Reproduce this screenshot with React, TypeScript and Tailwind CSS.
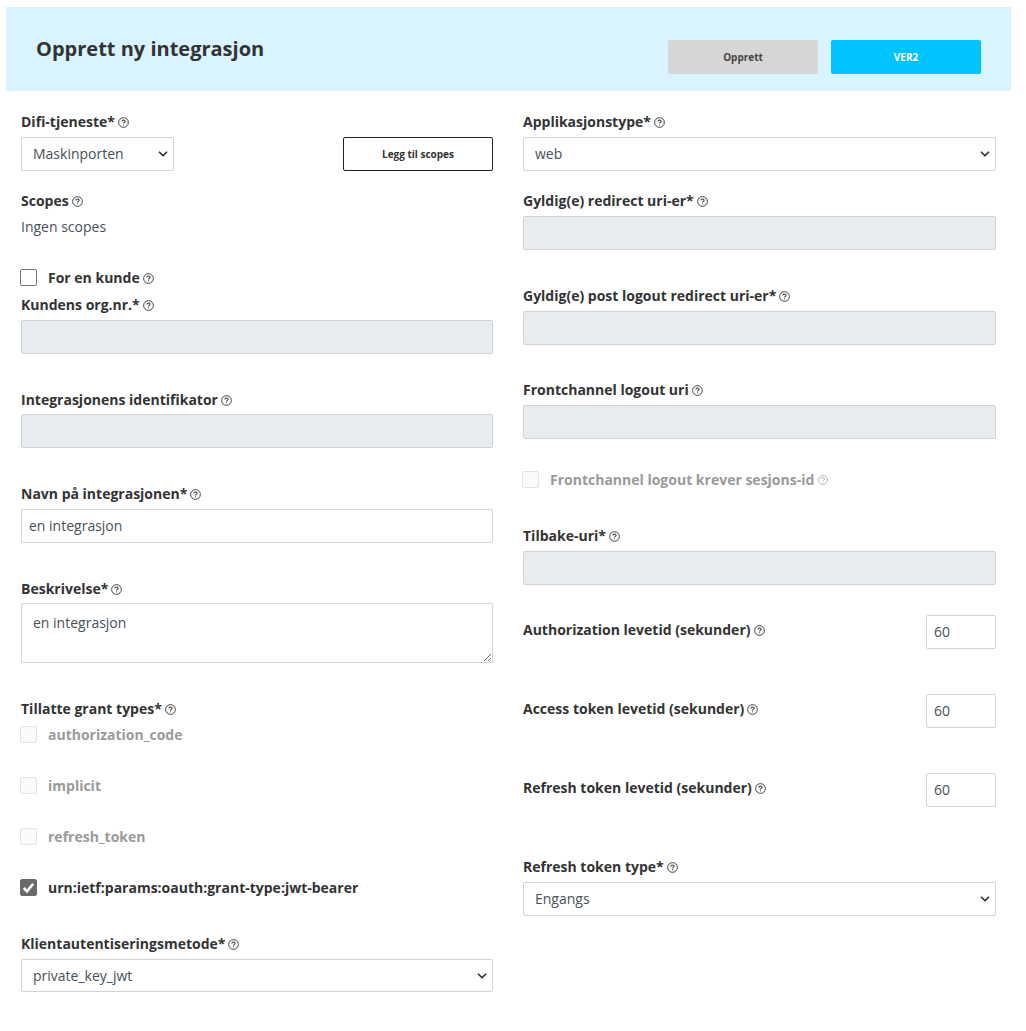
import { ChevronDown } from "lucide-react";

function Help(props: { muted?: boolean }) {
  return (
    <svg
      viewBox="0 0 12 12"
      className={`inline-block align-[-1px] ${props.muted ? "ml-[4px] h-[10px] w-[10px] text-[#aaaaaa]" : "ml-[3px] h-[11px] w-[11px] text-[#333333]"}`}
      fill="none"
      stroke="currentColor"
    >
      <circle cx="6" cy="6" r="5.3" strokeWidth="1" />
      <path d="M4.2 4.8c0-1 .8-1.6 1.8-1.6s1.8.6 1.8 1.5c0 1.2-1.8 1.2-1.8 2.5" strokeWidth="1.1" />
      <path d="M6 8.1v1" strokeWidth="1.1" />
    </svg>
  );
}

function Label(props: { text: string; className?: string }) {
  return (
    <div className={`h-5 text-sm leading-5 font-bold text-[#333333] ${props.className ?? ""}`}>
      {props.text}
      <Help />
    </div>
  );
}

function TextBox(props: { value?: string; disabled?: boolean; className?: string }) {
  return (
    <input
      readOnly
      disabled={props.disabled}
      defaultValue={props.value}
      className={`block h-[34px] w-full rounded-[2px] border border-[#ced4da] px-[7px] pb-[1px] text-sm text-[#495057] ${props.disabled ? "bg-[#e9ecef]" : "bg-white"} ${props.className ?? ""}`}
    />
  );
}

function Dropdown(props: { value: string; className?: string }) {
  return (
    <div className={`relative h-[34px] rounded-[2px] border border-[#ced4da] bg-white ${props.className ?? ""}`}>
      <select
        defaultValue={props.value}
        className="h-full w-full appearance-none bg-transparent pl-[11px] text-sm text-[#495057] outline-none"
      >
        <option>{props.value}</option>
      </select>
      <ChevronDown
        size={14}
        strokeWidth={3}
        className="pointer-events-none absolute top-[9px] right-[3px] text-[#333333]"
      />
    </div>
  );
}

function Check(props: { label: string; disabled?: boolean; checked?: boolean; className?: string }) {
  return (
    <label
      className={`flex h-5 items-center text-sm font-bold ${props.disabled ? "text-[#9a9a9a]" : "text-[#333333]"} ${props.className ?? ""}`}
    >
      <span className="relative -ml-px mr-[11px] mb-[1px] block h-[17px] w-[17px]">
        <input
          type="checkbox"
          disabled={props.disabled}
          defaultChecked={props.checked}
          className={`block h-[17px] w-[17px] appearance-none rounded-[2px] border ${props.disabled ? "border-[#e4e4e4] bg-[#fafafa]" : props.checked ? "border-[#6a6a6a] bg-[#6a6a6a]" : "border-[#767676] bg-white"}`}
        />
        {props.checked && (
          <svg viewBox="0 0 17 17" className="pointer-events-none absolute inset-0 h-[17px] w-[17px]" fill="none">
            <path d="M3.8 9l3.2 3.4L13.2 4.8" stroke="white" strokeWidth="2.6" />
          </svg>
        )}
      </span>
      {props.label}
    </label>
  );
}

function LifetimeRow(props: { label: string; className?: string }) {
  return (
    <div className={`flex h-[34px] items-start justify-between ${props.className ?? ""}`}>
      <Label text={props.label} className="mt-[5px]" />
      <TextBox value="60" className="!w-[70px]" />
    </div>
  );
}

export default function App() {
  return (
    <div className="ml-[6px] w-[1005px] pt-[7px] pb-[39px] font-['Open_Sans',sans-serif] bg-white">
      <div className="flex h-[84px] items-start justify-between bg-[#d9f3ff] pr-[30px] pl-[30px]">
        <h1 className="mt-[28px] text-xl leading-7 font-bold text-[#333333]">Opprett ny integrasjon</h1>
        <div className="mt-[33px] flex gap-[13px]">
          <button className="h-[34px] w-[150px] rounded-[2px] bg-[#d6d6d6] text-[10px] font-bold text-[#444444]">
            Opprett
          </button>
          <button className="h-[34px] w-[150px] rounded-[2px] bg-[#00c4ff] text-[10px] font-bold text-white">
            VER2
          </button>
        </div>
      </div>

      <div className="grid grid-cols-[472px_473px] gap-x-[30px] px-[15px] pt-[21px]">
        <div>
          <Label text="Difi-tjeneste*" />
          <div className="mt-[5px] flex items-start justify-between">
            <Dropdown value="Maskinporten" className="w-[153px]" />
            <button className="h-[34px] w-[150px] rounded-[2px] border border-[#222222] bg-white text-[10px] font-bold text-[#333333]">
              Legg til scopes
            </button>
          </div>

          <Label text="Scopes" className="mt-[20px]" />
          <div className="mt-[6px] h-5 text-sm leading-5 text-[#495057]">Ingen scopes</div>

          <div className="mt-[31px] flex h-5 items-center">
            <Check label="For en kunde" />
            <Help />
          </div>
          <Label text="Kundens org.nr.*" className="mt-[7px]" />
          <TextBox disabled className="mt-[5px]" />

          <Label text="Integrasjonens identifikator" className="mt-[36px]" />
          <TextBox disabled className="mt-[4px]" />

          <Label text="Navn på integrasjonen*" className="mt-[36px]" />
          <TextBox value="en integrasjon" className="mt-[5px]" />

          <Label text="Beskrivelse*" className="mt-[36px]" />
          <textarea
            readOnly
            defaultValue="en integrasjon"
            className="mt-[4px] block h-[60px] w-full rounded-[2px] border border-[#ced4da] bg-white px-[11px] pt-[9px] text-sm text-[#495057]"
          />

          <Label text="Tillatte grant types*" className="mt-[36px]" />
          <Check label="authorization_code" disabled className="mt-[6px]" />
          <Check label="implicit" disabled className="mt-[31px]" />
          <Check label="refresh_token" disabled className="mt-[31px]" />
          <Check label="urn:ietf:params:oauth:grant-type:jwt-bearer" checked className="mt-[31px]" />

          <Label text="Klientautentiseringsmetode*" className="mt-[36px]" />
          <Dropdown value="private_key_jwt" className="mt-[5px] !h-[33px]" />
        </div>

        <div>
          <Label text="Applikasjonstype*" />
          <Dropdown value="web" className="mt-[5px]" />

          <Label text="Gyldig(e) redirect uri-er*" className="mt-[20px]" />
          <TextBox disabled className="mt-[5px]" />

          <Label text="Gyldig(e) post logout redirect uri-er*" className="mt-[36px]" />
          <TextBox disabled className="mt-[5px]" />

          <Label text="Frontchannel logout uri" className="mt-[35px]" />
          <TextBox disabled className="mt-[5px]" />

          <div className="mt-[31px] flex h-5 items-center">
            <Check label="Frontchannel logout krever sesjons-id" disabled />
            <Help muted />
          </div>

          <Label text="Tilbake-uri*" className="mt-[36px]" />
          <TextBox disabled className="mt-[5px]" />

          <LifetimeRow label="Authorization levetid (sekunder)" className="mt-[30px]" />
          <LifetimeRow label="Access token levetid (sekunder)" className="mt-[45px]" />
          <LifetimeRow label="Refresh token levetid (sekunder)" className="mt-[45px]" />

          <Label text="Refresh token type*" className="mt-[50px]" />
          <Dropdown value="Engangs" className="mt-[5px]" />
        </div>
      </div>
    </div>
  );
}
